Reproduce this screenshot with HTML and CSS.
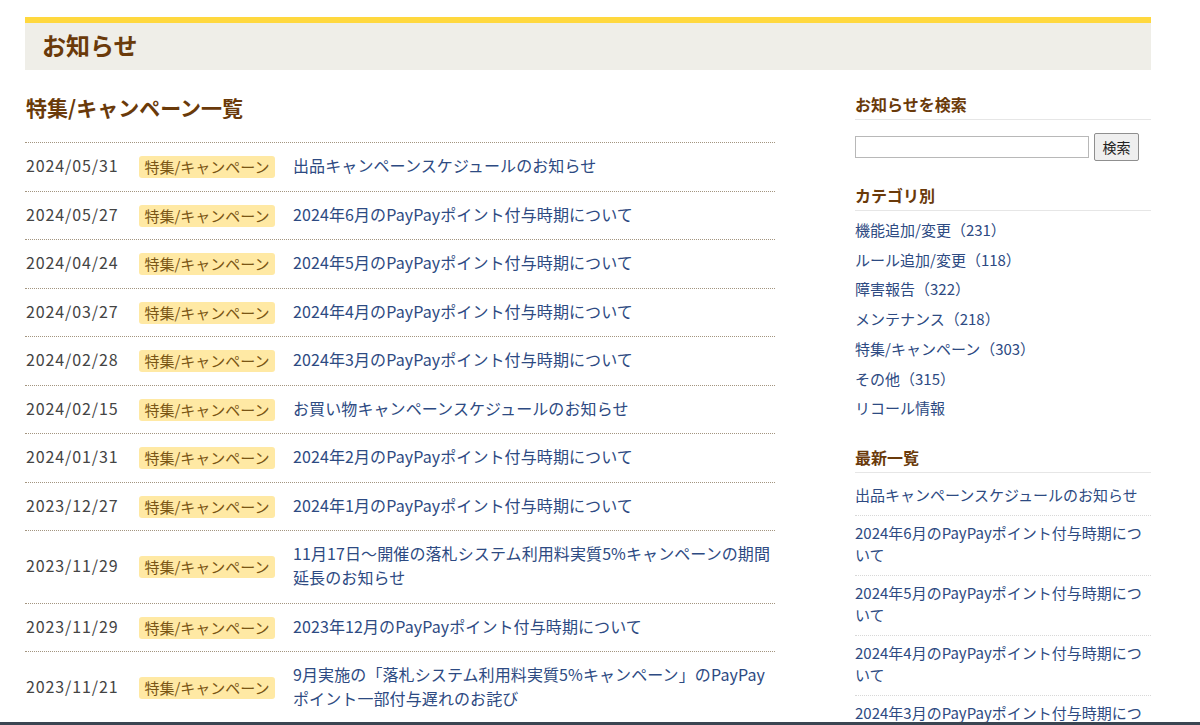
FILE: index.html
```html
<!DOCTYPE html>
<html lang="ja">
<head>
<meta charset="utf-8">
<title>お知らせ</title>
<link rel="stylesheet" href="styles.css">
</head>
<body>
<div class="page">
  <header class="page-header"><h1>お知らせ</h1></header>
  <div class="layout">
    <main class="main">
      <h2 class="main-title">特集/キャンペーン一覧</h2>
      <ul class="news">
        <li class="news-row"><span class="date">2024/05/31</span><span class="tag">特集/キャンペーン</span><a class="news-link" href="#">出品キャンペーンスケジュールのお知らせ</a></li>
        <li class="news-row"><span class="date">2024/05/27</span><span class="tag">特集/キャンペーン</span><a class="news-link" href="#">2024年6月のPayPayポイント付与時期について</a></li>
        <li class="news-row"><span class="date">2024/04/24</span><span class="tag">特集/キャンペーン</span><a class="news-link" href="#">2024年5月のPayPayポイント付与時期について</a></li>
        <li class="news-row"><span class="date">2024/03/27</span><span class="tag">特集/キャンペーン</span><a class="news-link" href="#">2024年4月のPayPayポイント付与時期について</a></li>
        <li class="news-row"><span class="date">2024/02/28</span><span class="tag">特集/キャンペーン</span><a class="news-link" href="#">2024年3月のPayPayポイント付与時期について</a></li>
        <li class="news-row"><span class="date">2024/02/15</span><span class="tag">特集/キャンペーン</span><a class="news-link" href="#">お買い物キャンペーンスケジュールのお知らせ</a></li>
        <li class="news-row"><span class="date">2024/01/31</span><span class="tag">特集/キャンペーン</span><a class="news-link" href="#">2024年2月のPayPayポイント付与時期について</a></li>
        <li class="news-row"><span class="date">2023/12/27</span><span class="tag">特集/キャンペーン</span><a class="news-link" href="#">2024年1月のPayPayポイント付与時期について</a></li>
        <li class="news-row"><span class="date">2023/11/29</span><span class="tag">特集/キャンペーン</span><a class="news-link" href="#">11月17日～開催の落札システム利用料実質5%キャンペーンの期間延長のお知らせ</a></li>
        <li class="news-row"><span class="date">2023/11/29</span><span class="tag">特集/キャンペーン</span><a class="news-link" href="#">2023年12月のPayPayポイント付与時期について</a></li>
        <li class="news-row"><span class="date">2023/11/21</span><span class="tag">特集/キャンペーン</span><a class="news-link" href="#">9月実施の「落札システム利用料実質5%キャンペーン」のPayPayポイント一部付与遅れのお詫び</a></li>
      </ul>
    </main>
    <aside class="side">
      <section class="side-block">
        <h3 class="side-title">お知らせを検索</h3>
        <form class="search">
          <input class="search-input" type="text">
          <button class="search-btn" type="button">検索</button>
        </form>
      </section>
      <section class="side-block">
        <h3 class="side-title">カテゴリ別</h3>
        <ul class="cats">
          <li><a href="#">機能追加/変更（231）</a></li>
          <li><a href="#">ルール追加/変更（118）</a></li>
          <li><a href="#">障害報告（322）</a></li>
          <li><a href="#">メンテナンス（218）</a></li>
          <li><a href="#">特集/キャンペーン（303）</a></li>
          <li><a href="#">その他（315）</a></li>
          <li><a href="#">リコール情報</a></li>
        </ul>
      </section>
      <section class="side-block">
        <h3 class="side-title">最新一覧</h3>
        <ul class="latest">
          <li><a href="#">出品キャンペーンスケジュールのお知らせ</a></li>
          <li><a href="#">2024年6月のPayPayポイント付与時期について</a></li>
          <li><a href="#">2024年5月のPayPayポイント付与時期について</a></li>
          <li><a href="#">2024年4月のPayPayポイント付与時期について</a></li>
          <li><a href="#">2024年3月のPayPayポイント付与時期について</a></li>
        </ul>
      </section>
    </aside>
  </div>
</div>
<div class="bottom-bar"></div>
</body>
</html>
```

FILE: styles.css
```css
html, body {
  margin: 0;
  padding: 0;
  background: #fff;
}
body {
  font-family: "Noto Sans CJK JP", "Noto Sans", sans-serif;
  color: #444;
  overflow: hidden;
}
ul { list-style: none; margin: 0; padding: 0; }
a { text-decoration: none; color: #2d4a82; }

.page {
  width: 1126px;
  margin: 17px 0 0 25px;
}
.page-header {
  border-top: 6px solid #ffd83e;
  background: #efeee8;
  height: 47px;
  display: flex;
  align-items: center;
  padding-left: 17px;
}
.page-header h1 {
  margin: -3px 0 0;
  font-size: 24px;
  font-weight: bold;
  color: #6a3a0a;
  line-height: 30px;
}

.layout {
  display: flex;
  gap: 80px;
  margin-top: 23px;
}
.main { width: 750px; }
.main-title {
  margin: 0 0 21px 1px;
  font-size: 21px;
  line-height: 28px;
  color: #6a3a0a;
  font-weight: bold;
}
.news { border-top: 1px dotted #a39580; }
.news-row {
  display: flex;
  align-items: center;
  padding: 10px 0 9.5px;
  border-bottom: 1px dotted #a39580;
  font-size: 16px;
  line-height: 24px;
}
.date {
  width: 113px;
  flex: none;
  padding: 0 0 4px 1px;
  letter-spacing: 0.9px;
  color: #444;
}
.tag {
  flex: none;
  width: 136px;
  box-sizing: border-box;
  height: 22px;
  line-height: 22px;
  text-align: center;
  font-size: 15px;
  background: #ffe9a4;
  color: #7a5615;
  border-radius: 3px;
}
.news-link {
  margin-left: 18px;
  padding-bottom: 4px;
  flex: 1;
  min-width: 0;
  letter-spacing: 0.1px;
}

.side { width: 296px; flex: none; margin-top: -1px; }
.side-block { margin-bottom: 22px; }
.side-title {
  margin: 0;
  font-size: 16px;
  line-height: 24px;
  padding-bottom: 3px;
  border-bottom: 1px solid #e6e6e6;
  color: #6a3a0a;
  font-weight: bold;
}
.search {
  display: flex;
  align-items: center;
  margin-top: 13px;
  gap: 5px;
}
.search-input {
  width: 234px;
  height: 22px;
  box-sizing: border-box;
  border: 1px solid #b8b8b8;
  margin: 0;
  padding: 0 3px;
}
.search-btn {
  width: 45px;
  height: 28px;
  box-sizing: border-box;
  margin: 0;
  padding: 0;
  border: 1px solid #8f8f8f;
  border-radius: 2px;
  background: #efefef;
  color: #222;
  font-family: "Noto Sans CJK JP", sans-serif;
  font-size: 14px;
}
.cats { margin-top: 4px; }
.cats li {
  font-size: 15px;
  line-height: 21.7px;
  padding: 4px 0;
}
.latest { margin-top: 5px; }
.latest li {
  font-size: 15px;
  line-height: 22px;
  padding: 6px 0 9px;
  border-bottom: 1px dotted #d8d8d8;
}
.bottom-bar {
  position: fixed;
  left: 0;
  right: 0;
  bottom: 0;
  height: 3px;
  background: #3b4552;
}
```
